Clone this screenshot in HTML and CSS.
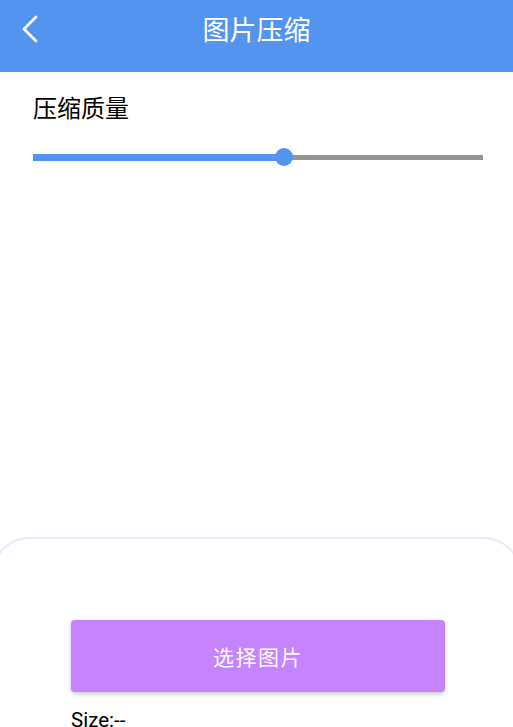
FILE: index.html
```html
<!DOCTYPE html>
<html lang="zh">
<head>
<meta charset="utf-8">
<title>图片压缩</title>
<link rel="stylesheet" href="styles.css">
</head>
<body>
<div class="page">
  <header class="appbar">
    <button class="back" aria-label="返回">
      <svg width="20" height="30" viewBox="0 0 20 30"><path d="M15 2 L3 14 L15 26" fill="none" stroke="#fff" stroke-width="2.8" stroke-linecap="round" stroke-linejoin="round"/></svg>
    </button>
    <h1 class="title">图片压缩</h1>
  </header>
  <section class="settings">
    <div class="label">压缩质量</div>
    <div class="slider">
      <div class="track-active" style="width:55.8%"></div>
      <div class="thumb"></div>
      <div class="track-rest"></div>
    </div>
  </section>
  <section class="card">
    <button class="pick">选择图片</button>
    <div class="size">Size:--</div>
  </section>
</div>
</body>
</html>
```
FILE: styles.css
```css
html, body {
  margin: 0;
  padding: 0;
  background: #fff;
  overflow: hidden;
}
.page {
  width: 513px;
  height: 727px;
  overflow: hidden;
  font-family: "Noto Sans CJK SC", "Noto Sans", sans-serif;
}
.appbar {
  height: 72px;
  box-sizing: border-box;
  background: #5294f0;
  display: flex;
  justify-content: center;
  align-items: flex-start;
  padding-top: 15px;
  position: relative;
}
.back {
  position: absolute;
  left: 21px;
  top: 15px;
  width: 20px;
  height: 30px;
  padding: 0;
  border: 0;
  background: none;
  display: flex;
}
.title {
  margin: 0;
  color: #fff;
  font-size: 27px;
  line-height: 27px;
  font-weight: 400;
  font-family: "Noto Sans CJK SC", sans-serif;
}
.settings {
  height: 465px;
  box-sizing: border-box;
  padding: 23px 30px 0 33px;
}
.label {
  font-size: 24px;
  line-height: 24px;
  color: #000;
}
.slider {
  margin-top: 29px;
  height: 18px;
  display: flex;
  align-items: center;
}
.track-active {
  height: 7px;
  background: #5294f0;
  flex: none;
}
.thumb {
  width: 18px;
  height: 18px;
  border-radius: 50%;
  background: #5294f0;
  flex: none;
  margin: 0 -9px;
  position: relative;
  z-index: 1;
}
.track-rest {
  flex: 1;
  height: 5px;
  background: #949494;
}
.card {
  margin: 0 -8px;
  border: 2px solid #efe7fe;
  border-bottom: 0;
  border-radius: 37px 37px 0 0;
  padding: 81px 0 0 77px;
  height: 300px;
}
.pick {
  display: block;
  width: 374px;
  height: 72px;
  border: 0;
  border-radius: 4px;
  background: #c583fd;
  color: #fff;
  font-family: "Noto Sans CJK SC", sans-serif;
  font-size: 21px;
  letter-spacing: 1.5px;
  box-shadow: 0 2px 4px rgba(0, 0, 0, 0.22);
  padding: 0;
}
.size {
  margin-top: 16px;
  font-family: Roboto, "Noto Sans", sans-serif;
  font-size: 20.5px;
  line-height: 24px;
  color: #000;
}
```
